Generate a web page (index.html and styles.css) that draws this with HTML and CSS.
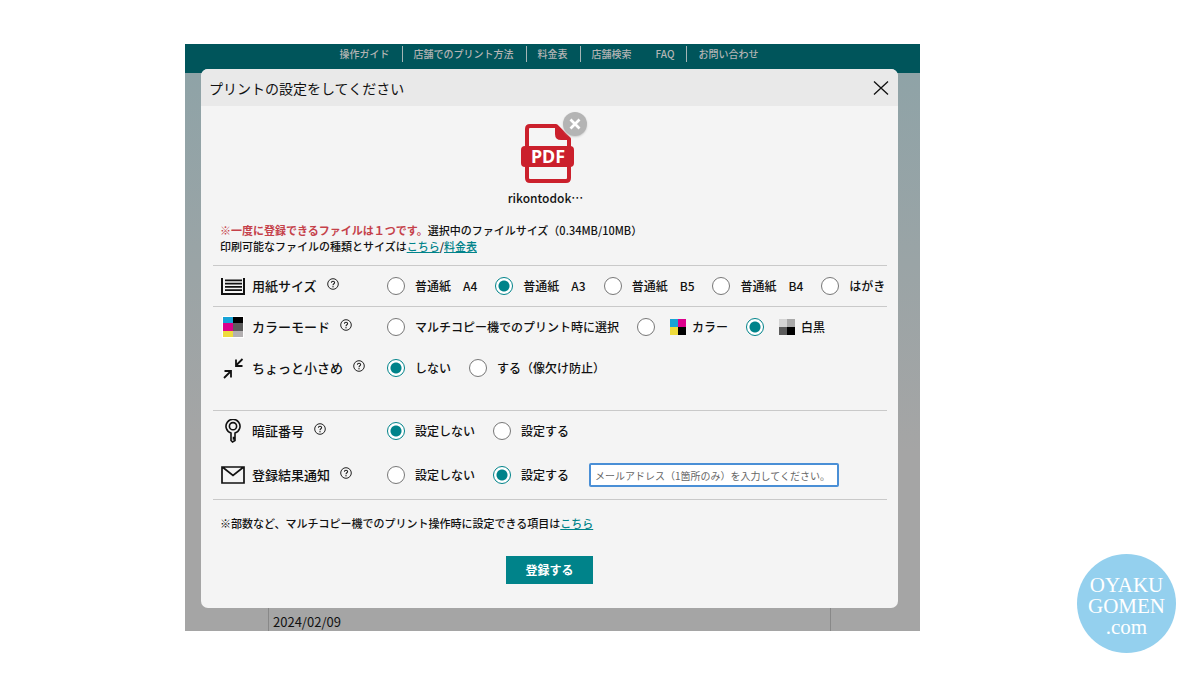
FILE: index.html
```html
<!DOCTYPE html>
<html lang="ja">
<head>
<meta charset="utf-8">
<meta name="viewport" content="width=device-width, initial-scale=1">
<title>プリントの設定</title>
<link rel="stylesheet" href="styles.css">
</head>
<body>
<svg class="defs" aria-hidden="true">
  <symbol id="help" viewBox="0 0 12 12">
    <circle cx="6" cy="6" r="5.3" fill="none" stroke="#222" stroke-width="1"/>
    <path d="M4.4 4.8C4.4 2.6 7.7 2.7 7.6 4.7C7.5 5.8 6 5.8 6 7.2" fill="none" stroke="#222" stroke-width="1.1"/>
    <circle cx="6" cy="8.8" r=".7" fill="#222"/>
  </symbol>
</svg>
<div class="stage">
  <nav class="site-nav">
    <a href="#">操作ガイド</a>
    <a href="#">店舗でのプリント方法</a>
    <a href="#">料金表</a>
    <a href="#" class="no-rule">店舗検索</a>
    <a href="#">FAQ</a>
    <a href="#" class="no-rule">お問い合わせ</a>
  </nav>
  <main class="backdrop">
    <form class="dialog" role="dialog" aria-labelledby="dialog-title">
      <header class="dialog-head">
        <h1 id="dialog-title">プリントの設定をしてください</h1>
        <button type="button" class="close" aria-label="閉じる">
          <svg width="16" height="16" viewBox="0 0 16 16"><path d="M1 1.5L15 14.5M15 1.5L1 14.5" stroke="#111" stroke-width="1.3" fill="none"/></svg>
        </button>
      </header>

      <div class="file">
        <div class="file-icon">
          <svg width="54" height="60" viewBox="0 0 54 60" role="img" aria-label="PDF">
            <path d="M9 2H35L48 15V54Q48 57 45 57H9Q6 57 6 54V5Q6 2 9 2Z" fill="#f5f5f5" stroke="#cb202c" stroke-width="4" stroke-linejoin="round"/>
            <path d="M34 2H36L49 15V16H40Q34 16 34 10Z" fill="#cb202c"/>
            <rect x="0" y="22" width="53" height="21" rx="4" fill="#cb202c"/>
            <text x="27" y="39" text-anchor="middle" class="pdf-text">PDF</text>
          </svg>
          <button type="button" class="remove" aria-label="削除">
            <svg width="12" height="12" viewBox="0 0 12 12"><path d="M1.5 1.5L10.5 10.5M10.5 1.5L1.5 10.5" stroke="#fff" stroke-width="2.7" fill="none"/></svg>
          </button>
        </div>
        <span class="file-name">rikontodok…</span>
      </div>

      <p class="notice"><strong>※一度に登録できるファイルは１つです。</strong>選択中のファイルサイズ（0.34MB/10MB）<br>印刷可能なファイルの種類とサイズは<a href="#">こちら</a>/<a href="#">料金表</a></p>

      <div class="settings">
        <section class="group">
          <div class="row" role="radiogroup" aria-labelledby="l-size">
            <svg class="icon" width="24" height="24" viewBox="0 0 24 24"><path d="M1 4V20H23V4" fill="none" stroke="#111" stroke-width="2"/><path d="M4 6.3H21M4 9.6H21M4 12.9H21M4 16.2H21" stroke="#111" stroke-width="1.8"/></svg>
            <span class="label"><span id="l-size">用紙サイズ</span><button type="button" class="help" aria-label="ヘルプ"><svg width="12" height="12"><use href="#help"/></svg></button></span>
            <div class="options">
              <label><input type="radio" name="size">普通紙　A4</label>
              <label><input type="radio" name="size" checked>普通紙　A3</label>
              <label><input type="radio" name="size">普通紙　B5</label>
              <label><input type="radio" name="size">普通紙　B4</label>
              <label><input type="radio" name="size">はがき</label>
            </div>
          </div>
        </section>

        <section class="group group-tall">
          <div class="row" role="radiogroup" aria-labelledby="l-color">
            <svg class="icon" width="24" height="24" viewBox="0 0 24 24" shape-rendering="crispEdges"><path fill="#fff" d="M1 1H23V23H1z"/><path fill="#18a3d6" d="M2 2H12V8H2z"/><path fill="#000" d="M12 2H22V8H12z"/><path fill="#dc008c" d="M2 8H12V16H2z"/><path fill="#5c5c5c" d="M12 8H22V16H12z"/><path fill="#eedb3c" d="M2 16H12V22H2z"/><path fill="#b3b0b1" d="M12 16H22V22H12z"/></svg>
            <span class="label"><span id="l-color">カラーモード</span><button type="button" class="help" aria-label="ヘルプ"><svg width="12" height="12"><use href="#help"/></svg></button></span>
            <div class="options">
              <label><input type="radio" name="color">マルチコピー機でのプリント時に選択</label>
              <label><input type="radio" name="color"><svg class="swatch" width="16" height="16" viewBox="0 0 16 16" shape-rendering="crispEdges"><path fill="#18a3d6" d="M0 0H8V8H0z"/><path fill="#dc008c" d="M8 0H16V8H8z"/><path fill="#eedb3c" d="M0 8H8V16H0z"/><path d="M8 8H16V16H8z"/></svg>カラー</label>
              <label><input type="radio" name="color" checked><svg class="swatch" width="16" height="16" viewBox="0 0 16 16" shape-rendering="crispEdges"><path fill="#d4d4d4" d="M0 0H8V8H0z"/><path fill="#a9a9a9" d="M8 0H16V8H8z"/><path fill="#5c5c5c" d="M0 8H8V16H0z"/><path d="M8 8H16V16H8z"/></svg>白黒</label>
            </div>
          </div>
          <div class="row" role="radiogroup" aria-labelledby="l-small">
            <svg class="icon" width="24" height="24" viewBox="0 0 24 24"><path d="M21.5 3L15 9.5M15 3.5V10H21.5M3 22L9.5 15.5M3.500 15H10V21.5" fill="none" stroke="#111" stroke-width="1.800"/></svg>
            <span class="label"><span id="l-small">ちょっと小さめ</span><button type="button" class="help" aria-label="ヘルプ"><svg width="12" height="12"><use href="#help"/></svg></button></span>
            <div class="options">
              <label><input type="radio" name="small" checked>しない</label>
              <label><input type="radio" name="small">する（像欠け防止）</label>
            </div>
          </div>
        </section>

        <section class="group">
          <div class="row" role="radiogroup" aria-labelledby="l-pin">
            <svg class="icon" width="24" height="24" viewBox="0 0 24 24"><g fill="none" stroke="#111" stroke-width="1.6"><path d="M10 14V21.5L11.5 23L14 21.5V20H12.5V18.5H14V14A7 7 0 1 0 10 14Z"/><circle cx="12" cy="7.2" r="3.6"/></g></svg>
            <span class="label"><span id="l-pin">暗証番号</span><button type="button" class="help" aria-label="ヘルプ"><svg width="12" height="12"><use href="#help"/></svg></button></span>
            <div class="options">
              <label><input type="radio" name="pin" checked>設定しない</label>
              <label><input type="radio" name="pin">設定する</label>
            </div>
          </div>
          <div class="row" role="radiogroup" aria-labelledby="l-mail">
            <svg class="icon" width="24" height="24" viewBox="0 0 24 24"><path d="M1 4H23V20H1ZM2 4.5L12 12.5L22 4.5" fill="none" stroke="#111" stroke-width="1.7"/></svg>
            <span class="label"><span id="l-mail">登録結果通知</span><button type="button" class="help" aria-label="ヘルプ"><svg width="12" height="12"><use href="#help"/></svg></button></span>
            <div class="options">
              <label><input type="radio" name="mail">設定しない</label>
              <label><input type="radio" name="mail" checked>設定する</label>
              <input type="email" class="mail" aria-label="メールアドレス" placeholder="メールアドレス（1箇所のみ）を入力してください。">
            </div>
          </div>
        </section>
      </div>

      <p class="note">※部数など、マルチコピー機でのプリント操作時に設定できる項目は<a href="#">こちら</a></p>
      <button type="submit" class="submit">登録する</button>
    </form>
    <div class="history">2024/02/09</div>
  </main>
</div>
<aside class="brand">OYAKU<br>GOMEN<br>.com</aside>
</body>
</html>
```
FILE: styles.css
```css
* {
  box-sizing: border-box;
}

body {
  margin: 0;
  min-height: 100vh;
  display: grid;
  grid-template-columns: minmax(0, 1fr) 99px;
  column-gap: 157px;
  align-items: start;
  padding: 44px 24px 22px 185px;
  background: #fff;
  color: #111;
  font: 500 12px/16px "Noto Sans CJK JP", sans-serif;
}

h1,
p {
  margin: 0;
}

button {
  border: 0;
  padding: 0;
  background: none;
  font: inherit;
  color: inherit;
}

button svg {
  display: block;
}

a {
  color: #00838a;
}

.defs {
  position: absolute;
  width: 0;
  height: 0;
}

.site-nav {
  display: flex;
  justify-content: center;
  padding: 2px 5px 11px 0;
  background: #00555b;
  font-size: 10px;
  white-space: nowrap;
}

.site-nav a {
  padding: 0 12px 0 11px;
  border-right: 1px solid #a5b5b5;
  color: #b4b4b4;
  text-decoration: none;
}

.site-nav a.no-rule {
  border-color: transparent;
}

.backdrop {
  display: flow-root;
  padding: 0 22px 0 16px;
  background: linear-gradient(#8fa3a7, #a5a5a5 68%);
}

.dialog {
  position: relative;
  display: flex;
  flex-direction: column;
  margin-top: -4px;
  border-radius: 7px;
  background: #f4f4f4;
  overflow: hidden;
}

.dialog-head {
  display: flex;
  align-items: center;
  justify-content: space-between;
  padding: 9px 9px 8px 8px;
  background: #e9e9e9;
}

.dialog-head h1 {
  font-size: 14px;
  line-height: 20px;
  font-weight: 400;
}

.file {
  display: flex;
  flex-direction: column;
  align-items: center;
  gap: 6px;
  padding: 18px 4px 16px 0;
}

.file-icon {
  position: relative;
}

.file-icon > svg {
  display: block;
}

.pdf-text {
  font: 700 18px "Noto Sans", sans-serif;
  fill: #fff;
}

.remove {
  position: absolute;
  top: -12px;
  right: -12px;
  display: grid;
  place-items: center;
  width: 24px;
  height: 24px;
  border-radius: 50%;
  background: #b4b4b4;
  box-shadow: 0 1px 2px #ccc;
}

.file-name {
  padding-right: 4px;
}

.notice,
.note {
  padding-left: 19px;
  font-size: 11px;
}

.notice strong {
  color: #c5414a;
  font-weight: 700;
}

.settings {
  margin: 11px 11px 0 12px;
  border-bottom: 1px solid #c9c9c9;
}

.group {
  display: grid;
  row-gap: 4px;
  border-top: 1px solid #c9c9c9;
}

.group:last-child {
  padding-bottom: 4px;
}

.group-tall {
  row-gap: 1px;
  padding-bottom: 22px;
}

.row {
  display: grid;
  grid-template-columns: 24px 128px minmax(0, 1fr);
  column-gap: 7px;
  align-items: center;
  min-height: 40px;
  padding-left: 8px;
  white-space: nowrap;
}

.label {
  display: flex;
  align-items: center;
  gap: 10px;
  font-size: 13px;
}

.help {
  padding-bottom: 4px;
}

.options,
.options label {
  display: flex;
  align-items: center;
}

.options {
  gap: 18px;
}

.options label {
  gap: 10px;
}

input[type="radio"] {
  appearance: none;
  flex: none;
  width: 18px;
  height: 18px;
  margin: 0;
  border: 1px solid #777;
  border-radius: 50%;
  background: #fff;
}

input[type="radio"]:checked {
  border-color: #00838a;
  background: radial-gradient(circle, #00838a 5px, #fff 6px);
}

.swatch {
  margin: 0 -4px 0 5px;
}

.mail {
  flex: 0 1 250px;
  min-width: 0;
  height: 24px;
  margin-left: 2px;
  padding: 0 4px;
  border: 2px solid #4a8fd6;
  border-radius: 2px;
  background: #fff;
  font: 400 10px/16px "Noto Sans CJK JP", sans-serif;
}

.mail::placeholder {
  color: #666;
}

.note {
  margin-top: 15px;
}

.submit {
  align-self: center;
  margin: 25px 0 24px;
  padding: 4px 19px;
  background: #00838a;
  color: #fff;
  font-weight: 700;
  line-height: 20px;
}

.history {
  margin: 0 67px;
  padding: 4px 4px 0;
  border: solid #888;
  border-width: 0 1px;
  font-size: 13px;
  font-weight: 400;
  line-height: 19px;
}

.brand {
  display: grid;
  place-content: center;
  align-self: end;
  aspect-ratio: 1;
  padding-top: 6px;
  border-radius: 50%;
  background: #94d0ee;
  color: #fff;
  font: 400 21px/21px "Liberation Serif", serif;
  text-align: center;
}
```
